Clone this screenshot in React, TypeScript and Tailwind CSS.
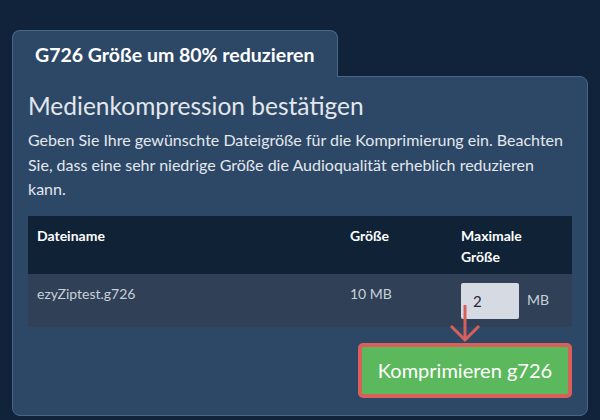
import React from "react";

export default function App() {
  return (
    <div className="relative w-[600px] h-[420px] overflow-hidden bg-[#10233a] pt-[30px] pl-[12px] font-['Lato',sans-serif]">
      <div className="relative z-10 -mb-px w-[326px] h-[47px] rounded-t-[8px] border border-b-0 border-[#4a6586] bg-[#2d4867] pl-[22px] pt-[12px]">
        <span className="text-[19.5px] font-bold leading-[1.2] text-white">G726 Größe um 80% reduzieren</span>
      </div>
      <div className="w-[576px] h-[340px] rounded-tr-[8px] rounded-b-[8px] border border-[#4a6586] bg-[#2d4867] px-[15px] pt-[14px]">
        <h1 className="text-[24.5px] leading-[1.2] text-[#e3e7ec]">Medienkompression bestätigen</h1>
        <p className="mt-[8px] text-[16px] leading-[24.5px] text-[#e3e7ec]">
          Geben Sie Ihre gewünschte Dateigröße für die Komprimierung ein. Beachten Sie, dass eine sehr niedrige Größe die Audioqualität erheblich reduzieren kann.
        </p>
        <div className="mt-[14px]">
          <div className="grid h-[58px] grid-cols-[313px_111px_1fr] bg-[#0f2236] pt-[9px] text-[14px] font-bold leading-[21px] text-white">
            <div className="px-[9px]">Dateiname</div>
            <div className="px-[9px]">Größe</div>
            <div className="px-[9px]">
              Maximale
              <br />
              Größe
            </div>
          </div>
          <div className="grid h-[53px] grid-cols-[313px_111px_1fr] bg-[#2f4057] pt-[8px] text-[14px] leading-[20px] text-[#c9d0d9]">
            <div className="px-[9px] pt-[2px]">ezyZiptest.g726</div>
            <div className="px-[9px] pt-[2px]">10 MB</div>
            <div className="flex items-center gap-[8px] self-start pl-[9px]">
              <div className="mt-[1px] flex h-[36px] w-[58px] items-center rounded-[2px] bg-[#d6dbe3] pl-[12px] text-[15px] text-[#1f2733]">
                2
              </div>
              <span>MB</span>
            </div>
          </div>
        </div>
        <div className="mt-[16px] flex justify-end">
          <button className="h-[55px] w-[214px] rounded-[5px] border-[4px] border-[#d9605a] bg-[#5cb85c] text-[20px] leading-none text-white">
            Komprimieren g726
          </button>
        </div>
      </div>
      <svg className="absolute left-[449px] top-[304px]" width="32" height="40" viewBox="0 0 32 40">
        <path d="M16 1 L16 36" stroke="#d9605a" strokeWidth="3" fill="none" />
        <path d="M2 22 L16 36 L30 22" stroke="#d9605a" strokeWidth="3" fill="none" />
      </svg>
    </div>
  );
}
